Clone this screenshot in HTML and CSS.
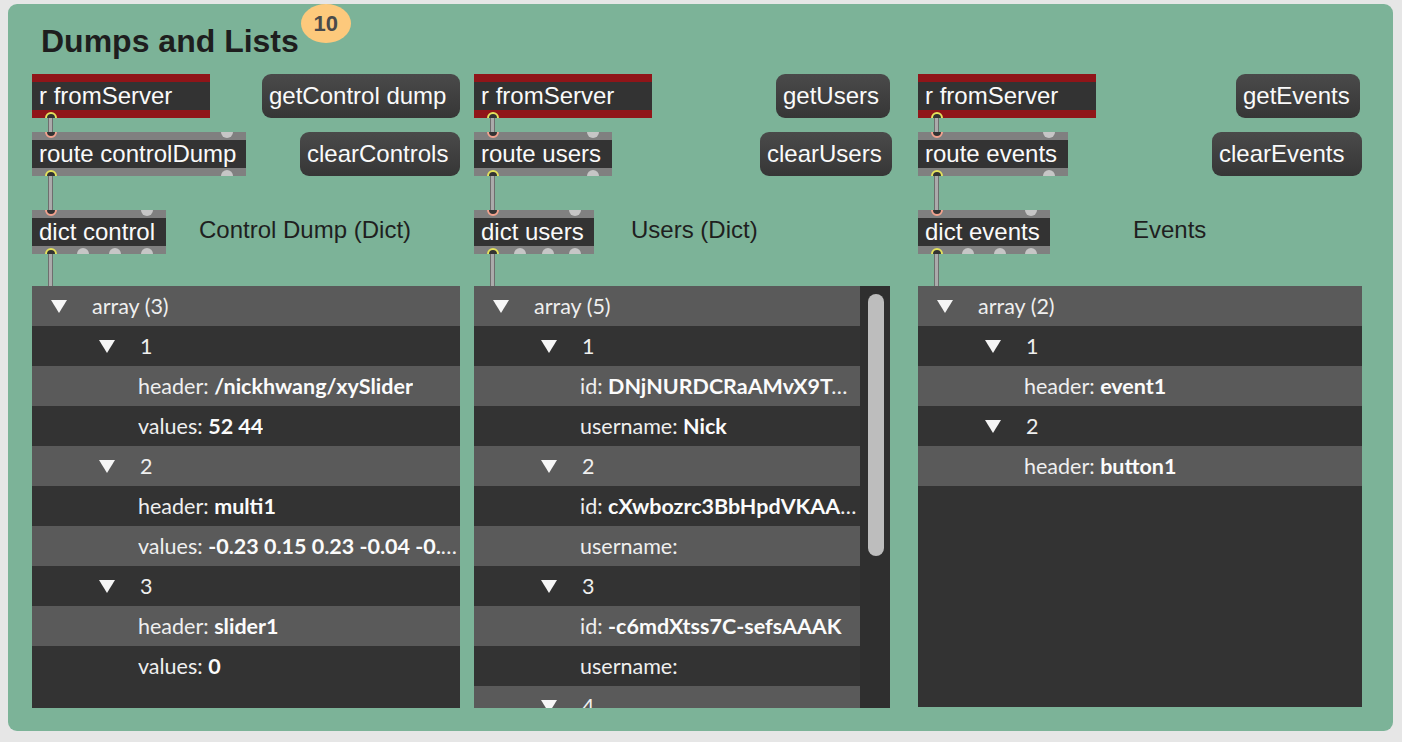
FILE: index.html
```html
<!DOCTYPE html>
<html>
<head>
<meta charset="utf-8">
<link rel="stylesheet" href="styles.css">
</head>
<body>
<div class="panel">
  <div class="title-row">
    <h1 class="title">Dumps and Lists</h1>
    <span class="badge">10</span>
  </div>
  <div class="columns">
    <!-- Column 1 -->
    <div class="col col-1">
      <div class="row">
        <div class="obj recv w-rfrom">
          <div class="band"></div>
          <div class="obj-text">r fromServer</div>
          <div class="band bottom"><span class="port out"></span></div>
        </div>
        <div class="msg w-getcontrol">getControl dump</div>
      </div>
      <div class="cord c-14"></div>
      <div class="row">
        <div class="obj w-route-control">
          <div class="band"><span class="port in"></span><span class="port"></span></div>
          <div class="obj-text">route controlDump</div>
          <div class="band bottom"><span class="port out"></span><span class="port"></span></div>
        </div>
        <div class="msg w-clearcontrols">clearControls</div>
      </div>
      <div class="cord c-34"></div>
      <div class="row row-start">
        <div class="obj w-dict-control">
          <div class="band"><span class="port in"></span><span class="port"></span></div>
          <div class="obj-text">dict control</div>
          <div class="band bottom"><span class="port out"></span><span class="port"></span><span class="port"></span><span class="port"></span></div>
        </div>
        <div class="label l-control">Control Dump (Dict)</div>
      </div>
      <div class="cord c-32"></div>
      <div class="view">
        <div class="rows">
          <div class="tr lvl0"><span class="tri"></span><span class="txt">array (3)</span></div>
          <div class="tr lvl1"><span class="tri"></span><span class="txt">1</span></div>
          <div class="tr leaf"><span class="txt">header: <b>/nickhwang/xySlider</b></span></div>
          <div class="tr leaf"><span class="txt">values: <b>52 44</b></span></div>
          <div class="tr lvl1"><span class="tri"></span><span class="txt">2</span></div>
          <div class="tr leaf"><span class="txt">header: <b>multi1</b></span></div>
          <div class="tr leaf"><span class="txt">values: <b>-0.23 0.15 0.23 -0.04 -0.31 0.12</b></span></div>
          <div class="tr lvl1"><span class="tri"></span><span class="txt">3</span></div>
          <div class="tr leaf"><span class="txt">header: <b>slider1</b></span></div>
          <div class="tr leaf"><span class="txt">values: <b>0</b></span></div>
        </div>
      </div>
    </div>

    <!-- Column 2 -->
    <div class="col col-2">
      <div class="row">
        <div class="obj recv w-rfrom">
          <div class="band"></div>
          <div class="obj-text">r fromServer</div>
          <div class="band bottom"><span class="port out"></span></div>
        </div>
        <div class="msg w-getusers">getUsers</div>
      </div>
      <div class="cord c-14"></div>
      <div class="row">
        <div class="obj w-route-users">
          <div class="band"><span class="port in"></span><span class="port"></span></div>
          <div class="obj-text">route users</div>
          <div class="band bottom"><span class="port out"></span><span class="port"></span></div>
        </div>
        <div class="msg w-clearusers">clearUsers</div>
      </div>
      <div class="cord c-34"></div>
      <div class="row row-start">
        <div class="obj w-dict-users">
          <div class="band"><span class="port in"></span><span class="port"></span></div>
          <div class="obj-text">dict users</div>
          <div class="band bottom"><span class="port out"></span><span class="port"></span><span class="port"></span><span class="port"></span></div>
        </div>
        <div class="label l-users">Users (Dict)</div>
      </div>
      <div class="cord c-32"></div>
      <div class="view">
        <div class="rows">
          <div class="tr lvl0"><span class="tri"></span><span class="txt">array (5)</span></div>
          <div class="tr lvl1"><span class="tri"></span><span class="txt">1</span></div>
          <div class="tr leaf"><span class="txt">id: <b>DNjNURDCRaAMvX9TAAAJ</b></span></div>
          <div class="tr leaf"><span class="txt">username: <b>Nick</b></span></div>
          <div class="tr lvl1"><span class="tri"></span><span class="txt">2</span></div>
          <div class="tr leaf"><span class="txt">id: <b>cXwbozrc3BbHpdVKAAAM</b></span></div>
          <div class="tr leaf"><span class="txt">username:</span></div>
          <div class="tr lvl1"><span class="tri"></span><span class="txt">3</span></div>
          <div class="tr leaf"><span class="txt">id: <b>-c6mdXtss7C-sefsAAAK</b></span></div>
          <div class="tr leaf"><span class="txt">username:</span></div>
          <div class="tr lvl1"><span class="tri"></span><span class="txt">4</span></div>
        </div>
        <div class="scroll"><div class="thumb"></div></div>
      </div>
    </div>

    <!-- Column 3 -->
    <div class="col col-3">
      <div class="row">
        <div class="obj recv w-rfrom">
          <div class="band"></div>
          <div class="obj-text">r fromServer</div>
          <div class="band bottom"><span class="port out"></span></div>
        </div>
        <div class="msg w-getevents">getEvents</div>
      </div>
      <div class="cord c-14"></div>
      <div class="row">
        <div class="obj w-route-events">
          <div class="band"><span class="port in"></span><span class="port"></span></div>
          <div class="obj-text">route events</div>
          <div class="band bottom"><span class="port out"></span><span class="port"></span></div>
        </div>
        <div class="msg w-clearevents">clearEvents</div>
      </div>
      <div class="cord c-34"></div>
      <div class="row row-start">
        <div class="obj w-dict-events">
          <div class="band"><span class="port in"></span><span class="port"></span></div>
          <div class="obj-text">dict events</div>
          <div class="band bottom"><span class="port out"></span><span class="port"></span><span class="port"></span><span class="port"></span></div>
        </div>
        <div class="label l-events">Events</div>
      </div>
      <div class="cord c-32"></div>
      <div class="view">
        <div class="rows">
          <div class="tr lvl0"><span class="tri"></span><span class="txt">array (2)</span></div>
          <div class="tr lvl1"><span class="tri"></span><span class="txt">1</span></div>
          <div class="tr leaf"><span class="txt">header: <b>event1</b></span></div>
          <div class="tr lvl1"><span class="tri"></span><span class="txt">2</span></div>
          <div class="tr leaf"><span class="txt">header: <b>button1</b></span></div>
        </div>
      </div>
    </div>
  </div>
</div>
</body>
</html>
```

FILE: styles.css
```css
* { box-sizing: border-box; }

html, body {
  margin: 0;
  padding: 0;
  background: #e6e6e6;
}

body {
  font-family: "Liberation Sans", Arial, sans-serif;
  width: 1402px;
  height: 742px;
  overflow: hidden;
}

.panel {
  margin: 4px 0 0 8px;
  width: 1385px;
  height: 727px;
  background: #7cb398;
  border-radius: 9px;
  padding: 0 0 0 24px;
}

.title-row {
  display: flex;
  align-items: flex-start;
  height: 56px;
}

.title {
  margin: 19px 0 0 9px;
  font-size: 32px;
  line-height: 36px;
  font-weight: bold;
  color: #1e1e1e;
}

.badge {
  margin-left: 2px;
  width: 50px;
  height: 39px;
  border-radius: 50%;
  background: #fdc97c;
  color: #4a4a4a;
  font-weight: bold;
  font-size: 22px;
  line-height: 39px;
  text-align: center;
}

.columns {
  display: flex;
  margin-top: 14px;
}

.col { display: flex; flex-direction: column; }
.col-1 { width: 428px; }
.col-2 { width: 416px; margin-left: 14px; }
.col-3 { width: 444px; margin-left: 28px; }

.row {
  display: flex;
  justify-content: space-between;
  align-items: flex-start;
  height: 44px;
}
.row-start { justify-content: flex-start; align-items: center; }

/* Max objects */
.obj {
  display: flex;
  flex-direction: column;
  height: 44px;
  background: #333;
}
.band {
  height: 8px;
  background: #808080;
  overflow: hidden;
  display: flex;
  justify-content: space-between;
  align-items: flex-start;
  padding: 0 13px;
}
.band.bottom { align-items: flex-end; }
.recv .band { background: #901519; }

.port {
  width: 12px;
  height: 12px;
  border-radius: 50%;
  background: #c6c6c6;
  margin-top: -6px;
  flex: none;
}
.band.bottom .port { margin-top: 0; margin-bottom: -6px; }
.port.in { background: #333; border: 2px solid #f2a28e; }
.port.out { background: #333; border: 2px solid #e4e25c; }

.obj-text {
  height: 28px;
  line-height: 28px;
  font-size: 24px;
  color: #fafafa;
  padding-left: 7px;
  white-space: nowrap;
}

.w-rfrom { width: 178px; }
.w-route-control { width: 214px; }
.w-dict-control { width: 134px; }
.w-route-users { width: 138px; }
.w-dict-users { width: 120px; }
.w-route-events { width: 150px; }
.w-dict-events { width: 132px; }

/* Message boxes */
.msg {
  height: 44px;
  border-radius: 9px;
  background: linear-gradient(#4a4a4a, #363636);
  color: #fafafa;
  font-size: 24px;
  line-height: 44px;
  padding-left: 7px;
  white-space: nowrap;
}
.w-getcontrol { width: 198px; }
.w-clearcontrols { width: 160px; }
.w-getusers { width: 114px; }
.w-clearusers { width: 132px; margin-right: -2px; }
.w-getevents { width: 124px; margin-right: 2px; }
.w-clearevents { width: 150px; }

.label {
  font-size: 24px;
  line-height: 28px;
  color: #1f1f1f;
  margin-bottom: 5px;
  white-space: nowrap;
}
.l-control { margin-left: 33px; }
.l-users { margin-left: 37px; }
.l-events { margin-left: 83px; }

/* Patch cords */
.cord {
  width: 5px;
  margin-left: 16px;
  background: #ababab;
  border-left: 1px solid #6e6e6e;
  border-right: 1px solid #6e6e6e;
}
.c-14 { height: 14px; }
.c-34 { height: 34px; }
.c-32 { height: 32px; }

/* Dict view */
.view {
  height: 422px;
  background: #333;
  display: flex;
  overflow: hidden;
  font-family: Lato, "Noto Sans", sans-serif;
  color: #efefef;
}
.col-3 .view { height: 421px; }
.rows { flex: 1; min-width: 0; }
.tr {
  height: 40px;
  display: flex;
  align-items: center;
  font-size: 21.5px;
  white-space: nowrap;
}
.tr:nth-child(odd) { background: #5a5a5a; }
.tr b { font-weight: bold; color: #fbfbfb; }
.lvl0 { padding-left: 19px; }
.lvl1 { padding-left: 67px; }
.leaf { padding-left: 106px; }
.tri {
  flex: none;
  width: 0;
  height: 0;
  border-left: 8px solid transparent;
  border-right: 8px solid transparent;
  border-top: 13px solid #f6f6f6;
  margin: 1px 25px 0 0;
}
.txt {
  min-width: 0;
  overflow: hidden;
  text-overflow: ellipsis;
}

.scroll {
  width: 30px;
  flex: none;
  background: #2f2f2f;
  padding: 8px 6px 0 8px;
}
.thumb {
  height: 262px;
  border-radius: 8px;
  background: #bdbdbd;
}
```
